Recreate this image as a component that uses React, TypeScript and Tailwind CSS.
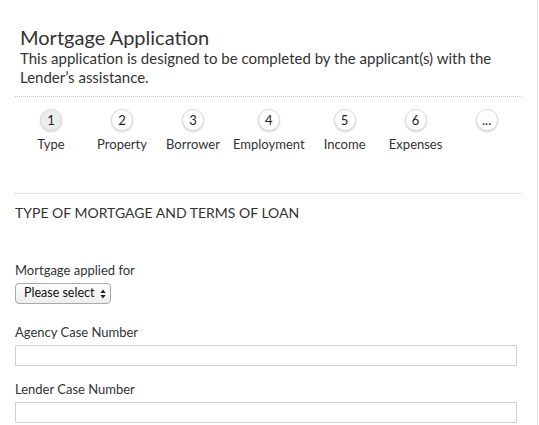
import React from 'react';

const steps = [
  { n: '1', label: 'Type', active: true },
  { n: '2', label: 'Property' },
  { n: '3', label: 'Borrower' },
  { n: '4', label: 'Employment' },
  { n: '5', label: 'Income' },
  { n: '6', label: 'Expenses' },
  { n: '...', label: '' },
];

function StepNav() {
  return (
    <ul className="flex gap-[9px] pl-[5px] pt-[12px]">
      {steps.map((s) => (
        <li key={s.n} className="flex min-w-[62px] flex-col items-center">
          <span
            className={`flex h-[22px] w-[22px] items-center justify-center rounded-full border border-[#dcdcdc] text-[13px] leading-none text-[#222] shadow-[0_1px_2px_rgba(0,0,0,0.18)] ${
              s.active ? 'bg-[#ececec]' : 'bg-white'
            }`}
          >
            {s.n}
          </span>
          <span className="mt-[4px] h-[18px] text-[13px] leading-[18px] text-[#333]">{s.label}</span>
        </li>
      ))}
    </ul>
  );
}

function Field({ label, className = '' }: { label: string; className?: string }) {
  return (
    <div className={className}>
      <label className="block text-[13px] leading-[18px] text-[#333]">{label}</label>
      <input
        type="text"
        className="mt-[4px] block h-[21px] w-[502px] border border-[#cfcfcf] bg-white outline-none"
      />
    </div>
  );
}

export default function App() {
  return (
    <div
      className="min-h-[425px] w-[538px] border-r border-[#e2e2e2] bg-white px-[15px] text-[#333]"
      style={{ fontFamily: 'Lato, "Open Sans", sans-serif' }}
    >
      <header className="pl-[5px] pt-[25px]">
        <h1 className="text-[20px] leading-[24px] text-[#333]">Mortgage Application</h1>
        <p className="text-[15px] leading-[19px] text-[#333]">
          This application is designed to be completed by the applicant(s) with the Lender’s assistance.
        </p>
      </header>

      <div className="mt-[9px] border-t border-dotted border-[#c8c8c8]" />

      <StepNav />

      <div className="mt-[40px] border-t border-dotted border-[#c8c8c8]" />

      <h2 className="mt-[9px] text-[14px] leading-[20px] text-[#333]">TYPE OF MORTGAGE AND TERMS OF LOAN</h2>

      <div className="mt-[38px]">
        <label className="block text-[13px] leading-[18px] text-[#333]">Mortgage applied for</label>
        <div className="mt-[4px] flex h-[21px] w-[96px] items-center justify-between whitespace-nowrap rounded-[4px] border border-[#a9a9a9] bg-gradient-to-b from-white to-[#ededed] pl-[8px] pr-[4px] text-[12.5px] leading-none text-[#111]">
          <span>Please select</span>
          <svg width="6" height="10" viewBox="0 0 6 10" className="shrink-0 fill-[#222]">
            <path d="M3 0.5 L5.6 4 H0.4 Z" />
            <path d="M3 9.5 L5.6 6 H0.4 Z" />
          </svg>
        </div>
      </div>

      <Field label="Agency Case Number" className="mt-[19px]" />
      <Field label="Lender Case Number" className="mt-[14px]" />
    </div>
  );
}
